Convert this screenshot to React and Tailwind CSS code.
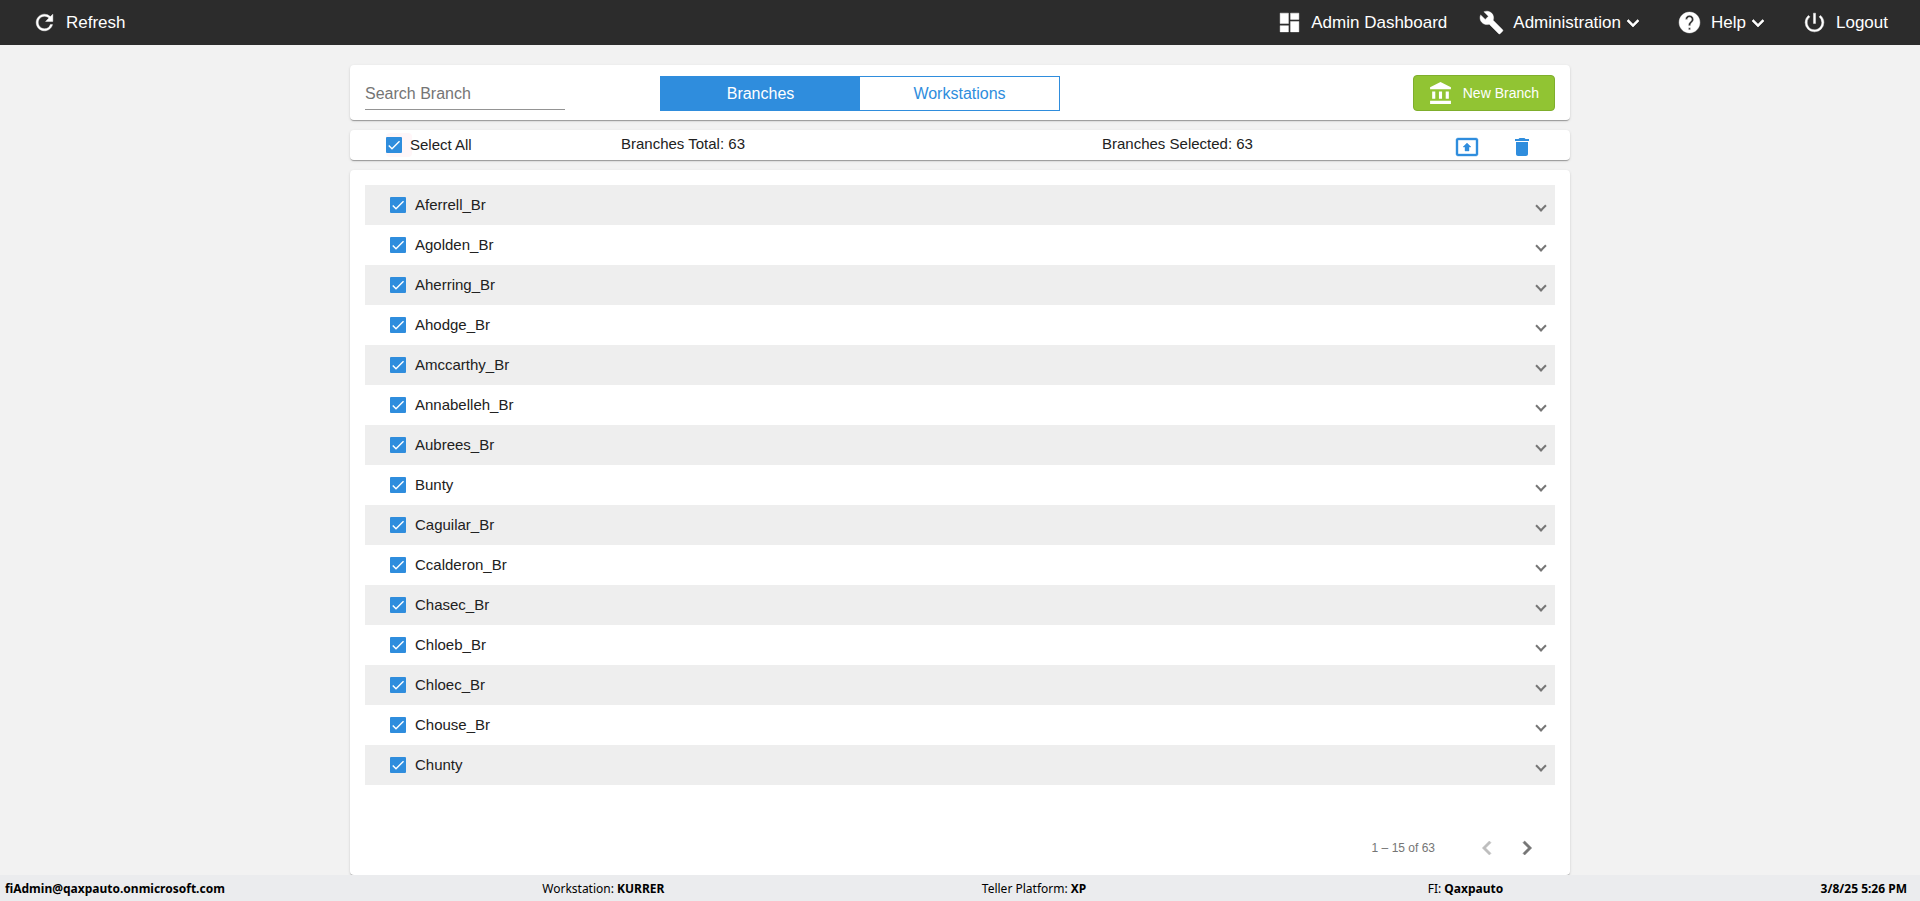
import {
  MdAccountBalance,
  MdBuild,
  MdChevronLeft,
  MdChevronRight,
  MdDashboard,
  MdDelete,
  MdExpandMore,
  MdHelp,
  MdPowerSettingsNew,
  MdPresentToAll,
  MdRefresh,
} from "react-icons/md";

const branches = [
  "Aferrell_Br",
  "Agolden_Br",
  "Aherring_Br",
  "Ahodge_Br",
  "Amccarthy_Br",
  "Annabelleh_Br",
  "Aubrees_Br",
  "Bunty",
  "Caguilar_Br",
  "Ccalderon_Br",
  "Chasec_Br",
  "Chloeb_Br",
  "Chloec_Br",
  "Chouse_Br",
  "Chunty",
];

const NavButton = ({ icon: Icon, label, menu }) => (
  <button type="button" className="flex items-center px-4 h-full">
    <Icon className="size-[25px] mr-[9px] [&_path:last-child]:stroke-[0.4]" />
    <span>{label}</span>
    {menu && (
      <MdExpandMore className="size-6 [&_path:last-child]:stroke-[0.6]" />
    )}
  </button>
);

const Checkbox = ({ id, focused }) => (
  <span className="relative flex size-4 shrink-0">
    {focused && (
      <span className="absolute -inset-y-1 left-0 w-[26px] rounded bg-[#fff6f8]" />
    )}
    <input
      id={id}
      type="checkbox"
      defaultChecked
      className="peer relative size-4 appearance-none rounded-[1px] border-2 border-gray-500 checked:border-[#2f8ddd] checked:bg-[#2f8ddd]"
    />
    <svg
      viewBox="0 0 24 24"
      className="pointer-events-none absolute inset-0 size-4 hidden peer-checked:block"
      fill="none"
      stroke="white"
      strokeWidth="2.1"
    >
      <path d="M4.1 12.7 9 17.6 20.3 6.3" />
    </svg>
  </span>
);

const Navbar = () => (
  <header className="h-[45px] shrink-0 bg-[#2c2c2c] text-white text-[17px] flex items-center justify-between px-4">
    <NavButton icon={MdRefresh} label="Refresh" />
    <nav className="flex items-center h-full">
      <NavButton icon={MdDashboard} label="Admin Dashboard" />
      <NavButton icon={MdBuild} label="Administration" menu />
      <NavButton icon={MdHelp} label="Help" menu />
      <NavButton icon={MdPowerSettingsNew} label="Logout" />
    </nav>
  </header>
);

const Toolbar = () => (
  <section className="bg-white rounded shadow-[0_2px_1px_-1px_rgba(0,0,0,0.2),0_1px_1px_rgba(0,0,0,0.14),0_1px_3px_rgba(0,0,0,0.12)] px-[15px] pt-[10px] pb-[9px] flex items-end">
    <input
      type="text"
      aria-label="Search Branch"
      placeholder="Search Branch"
      className="w-[200px] h-[34px] pt-[2px] self-center border-b border-[#949494] text-base placeholder:text-[#757575] outline-none"
    />
    <div className="ml-[95px] flex w-[400px] h-[35px] border border-[#2f8ddd]">
      <button type="button" className="flex-1 pt-px bg-[#2f8ddd] text-white">
        Branches
      </button>
      <button type="button" className="flex-1 pt-px text-[#2f8ddd]">
        Workstations
      </button>
    </div>
    <button
      type="button"
      className="ml-auto h-9 pl-[14px] pr-[15px] flex items-center rounded border border-[#7fae2c] bg-[#91c433] text-white text-sm"
    >
      <MdAccountBalance className="size-[25px] mr-[10px]" />
      New Branch
    </button>
  </section>
);

const SelectionBar = () => (
  <section className="h-[30px] bg-white rounded shadow-[0_2px_1px_-1px_rgba(0,0,0,0.2),0_1px_1px_rgba(0,0,0,0.14),0_1px_3px_rgba(0,0,0,0.12)] text-[15px] grid grid-cols-[271fr_481fr_353fr_115fr]">
    <div className="flex items-center pl-9">
      <Checkbox id="select-all" focused />
      <label htmlFor="select-all" className="relative pl-2">
        Select All
      </label>
    </div>
    <p className="leading-7">Branches Total: 63</p>
    <p className="leading-7">Branches Selected: 63</p>
    <div className="flex items-end gap-[31px] pb-px text-[#2f8ddd]">
      <button type="button" aria-label="Export branches">
        <MdPresentToAll className="size-6 [&_path:last-child]:stroke-[0.4]" />
      </button>
      <button type="button" aria-label="Delete branches">
        <MdDelete className="size-6" />
      </button>
    </div>
  </section>
);

const BranchRow = ({ name }) => (
  <li className="h-10 flex items-center pl-[25px] pr-[10px] odd:bg-[#eee]">
    <Checkbox id={name} />
    <label htmlFor={name} className="pl-[9px]">
      {name}
    </label>
    <button
      type="button"
      aria-label={`Expand ${name}`}
      className="ml-auto flex h-full items-center pt-[2px]"
    >
      <span className="size-2 rotate-45 border-r-2 border-b-2 border-[#757575]" />
    </button>
  </li>
);

const Paginator = () => (
  <div className="mt-auto h-[54px] flex items-center justify-end pr-2 text-xs text-[#757575]">
    <span className="mr-8">1 – 15 of 63</span>
    <button
      type="button"
      aria-label="Previous page"
      disabled
      className="size-10 flex items-center justify-center text-[#bdbdbd]"
    >
      <MdChevronLeft className="size-7 [&_path:last-child]:stroke-[0.5]" />
    </button>
    <button
      type="button"
      aria-label="Next page"
      className="size-10 flex items-center justify-center"
    >
      <MdChevronRight className="size-7 [&_path:last-child]:stroke-[0.5]" />
    </button>
  </div>
);

const StatusBar = () => (
  <footer className="h-[26px] shrink-0 bg-[#ebecee] text-black pl-[5px] pr-[13px] pt-px flex items-center justify-between font-['Noto_Sans',sans-serif] text-[12px]">
    <b>fiAdmin@qaxpauto.onmicrosoft.com</b>
    <span>
      Workstation: <b>KURRER</b>
    </span>
    <span>
      Teller Platform: <b>XP</b>
    </span>
    <span className="pl-6">
      FI: <b>Qaxpauto</b>
    </span>
    <b>3/8/25 5:26 PM</b>
  </footer>
);

const App = () => {
  return (
    <div className="min-h-screen flex flex-col bg-[#f2f2f2] text-[#212121] font-['Liberation_Sans',Arial,sans-serif]">
      <Navbar />
      <main className="flex-1 w-full max-w-[1220px] mx-auto pt-5 flex flex-col gap-[10px]">
        <Toolbar />
        <SelectionBar />
        <section className="flex-1 flex flex-col bg-white rounded shadow-[0_2px_1px_-1px_rgba(0,0,0,0.2),0_1px_1px_rgba(0,0,0,0.14),0_1px_3px_rgba(0,0,0,0.12)] p-[15px] pb-0">
          <ul className="text-[15px]">
            {branches.map((name) => (
              <BranchRow key={name} name={name} />
            ))}
          </ul>
          <Paginator />
        </section>
      </main>
      <StatusBar />
    </div>
  );
};

export default App;
